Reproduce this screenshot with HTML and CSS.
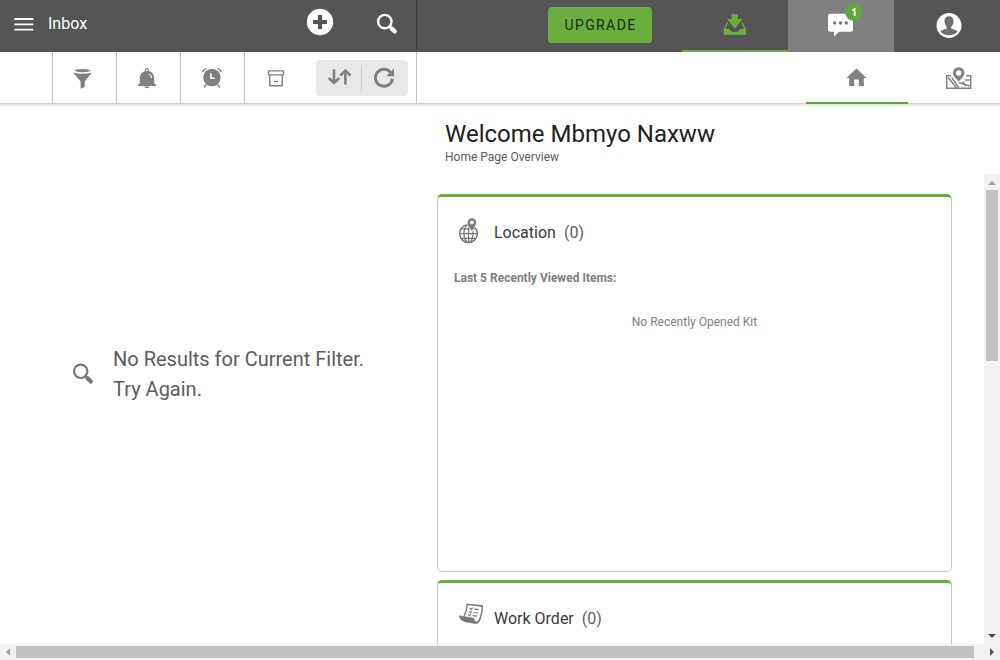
FILE: index.html
```html
<!DOCTYPE html>
<html lang="en">
<head>
<meta charset="utf-8">
<title>Inbox</title>
<link rel="stylesheet" href="styles.css">
</head>
<body>
<div class="app">
  <header class="topbar">
    <div class="topbar-left">
      <svg class="menu-icon" width="20" height="14" viewBox="0 0 20 14"><path d="M.3 2h19M.3 7.4h19M.3 12.6h19" stroke="#fff" stroke-width="1.9"/></svg>
      <span class="topbar-title">Inbox</span>
      <svg class="add-icon" width="28" height="28" viewBox="0 0 28 28"><circle cx="14" cy="14" r="13.2" fill="#fff"/><path d="M14 7v14M7 14h14" stroke="#555" stroke-width="4.2"/></svg>
      <svg class="find-icon" width="24" height="24" viewBox="0 0 24 24" fill="none" stroke="#fff"><circle cx="8.800" cy="9.600" r="6.700" stroke-width="2.400"/><path d="M13.800 14.600l1.800 1.800" stroke-width="2.600"/><path d="M15.800 16.600l2.900 2.900" stroke-width="4.400" stroke-linecap="round"/></svg>
    </div>
    <div class="topbar-right">
      <button class="upgrade">UPGRADE</button>
      <nav class="main-tabs">
        <a class="main-tab current"><svg width="24" height="24" viewBox="0 0 24 24" fill="#6aae40"><path d="M4 9L.7 16.300v5.400h22.200v-5.400L19.600 9l-1.200.8 2.800 6h-3.600l-2.400 2.700H8.400L6 15.800H2.400l2.800-6z"/><path d="M6.200 10.500L3.800 15.800h3l3 3.200h4l3-3.200h3L17.400 10.500z" fill="#555"/><path d="M8.600 1.300h6.300v4.800h4.700L11.800 15.800 4 6.100h4.600z"/></svg></a>
        <a class="main-tab chat"><svg width="28" height="26" viewBox="0 0 28 26"><path d="M3 1.800h21q2 0 2 2v14q0 2-2 2H12l-5 4.800v-4.800H3q-2 0-2-2v-14q0-2 2-2z" fill="#fff"/><g fill="#777"><circle cx="7.700" cy="11" r="1.700"/><circle cx="13.500" cy="11" r="1.700"/><circle cx="19.300" cy="11" r="1.700"/></g></svg><span class="badge">1</span></a>
        <a class="main-tab"><svg class="user-icon" width="26" height="26" viewBox="0 0 26 26"><circle cx="13" cy="12.500" r="12.500" fill="#fff"/><path d="M13 3.200c3 0 4.700 2 4.500 5-.1 2.500-1 4.400-2.300 5.500v1.700c2.500 1 5.200 1.400 6.400 2.900-2 2.700-5 4-8.600 4s-6.600-1.300-8.600-4c1.200-1.500 3.900-1.900 6.400-2.900v-1.700c-1.300-1.100-2.200-3-2.300-5.500-.2-3 1.500-5 4.500-5z" fill="#6e6e6e"/></svg></a>
      </nav>
    </div>
  </header>

  <div class="toolbar">
    <div class="toolbar-left">
      <div class="tool"><svg width="24" height="24" viewBox="0 0 24 24" fill="#808080"><ellipse cx="11.500" cy="4.600" rx="7.800" ry="1.600"/><path d="M2.600 6.700Q11.500 9 20.400 6.700V7.300L13.700 15.400V21L9.600 22.700V15.400L2.600 7.300z"/></svg></div>
      <div class="tool"><svg width="24" height="24" viewBox="0 0 24 24" fill="#808080"><circle cx="12" cy="4.200" r="1.600" fill="none" stroke="#808080" stroke-width="1.200"/><path d="M12 5c4.600 0 7.200 3.200 7.200 7.200v5.300l1.800 1.200v1.200H3v-1.200l1.800-1.200v-5.300C4.800 8.200 7.400 5 12 5z"/><path d="M9 20.500h6q-.5 1.700-3 1.700t-3-1.700z"/><path d="M14 8q2.400 1 2.700 4" fill="none" stroke="#fff" stroke-width="1.100"/></svg></div>
      <div class="tool"><svg width="24" height="24" viewBox="0 0 24 24"><circle cx="12.900" cy="11.500" r="8.700" fill="#808080"/><path d="M3.500 6.200Q4.500 3.200 7.300 2.500M22.300 6.200Q21.300 3.200 18.500 2.500M7.500 18.500l-2.800 3M18.300 18.500l2.800 3" fill="none" stroke="#808080" stroke-width="1.500"/><path d="M11.900 7.300v4.900h3.700" fill="none" stroke="#fff" stroke-width="1.600"/></svg></div>
      <div class="tool"><svg width="24" height="24" viewBox="0 0 24 24" fill="none" stroke="#808080" stroke-width="1.400"><path d="M5.500 4.900h15v4h-15zM6.700 8.900v10.800h12.600V8.900"/><path d="M11 15.500h4"/></svg></div>
      <div class="tool-group">
        <div class="group-cell"><svg width="26" height="20" viewBox="0 0 26 20" fill="none" stroke="#808080" stroke-width="2.600"><path d="M8 1.400v13M2.800 10l5.200 5 5.200-5M19.400 16.500V3M14.200 7.600l5.200-5 5.200 5"/></svg></div>
        <div class="group-cell"><svg width="24" height="24" viewBox="0 0 24 24"><path d="M17.400 6.200A8.500 8.500 0 1 0 19.400 12.600" fill="none" stroke="#808080" stroke-width="2.900"/><path d="M21 2.500V10.300H13.200z" fill="#808080"/></svg></div>
      </div>
    </div>
    <nav class="sub-tabs">
      <a class="sub-tab current"><svg width="22" height="20" viewBox="0 0 22 20" fill="#808080"><path d="M10.500 .4L.4 9.900h2.800V18.100h5v-6.500h4.600v6.500h5V9.900h2.800z"/></svg></a>
      <a class="sub-tab"><svg width="28" height="24" viewBox="0 0 28 24" fill="none" stroke="#808080" stroke-width="1.400"><path d="M6 9.700H1.700v12.600h24V9.700H21M3.200 11.500l8 10M6.700 11.500l7 10M13.700 16.500l11 3.500M17.700 15.500l3 4.500M19.700 14h5"/><path d="M13.700 16C10.700 12 7.700 10.200 7.700 6.900A6 6 0 0 1 19.700 6.900C19.700 10.200 16.700 12 13.700 16z" fill="#808080" stroke="#fff" stroke-width=".5"/><circle cx="13.700" cy="7" r="2.700" fill="#fff" stroke="none"/></svg></a>
    </nav>
  </div>

  <main class="content">
    <section class="results">
      <svg width="24" height="24" viewBox="0 0 24 24" fill="none" stroke="#777"><circle cx="8.700" cy="9.300" r="6.700" stroke-width="2.200"/><path d="M13.600 14.200l2 2" stroke-width="2.600"/><path d="M15.600 16.200l3.200 3.300" stroke-width="4.200" stroke-linecap="round"/></svg>
      <p>No Results for Current Filter.<br>Try Again.</p>
    </section>
    <section class="home">
      <div class="welcome"><h1>Welcome Mbmyo Naxww</h1><p>Home Page Overview</p></div>
      <div class="scroll-area">
        <div class="cards">
          <article class="card">
            <div class="card-head"><svg width="26" height="28" viewBox="0 -.8 26 28" fill="none" stroke="#777" stroke-width="1.200"><circle cx="11.500" cy="16.800" r="8.900" stroke-width="1.500"/><ellipse cx="11.500" cy="16.800" rx="4.600" ry="8.900"/><path d="M11.500 8v17.500M2.800 16.800h17.400M4.500 12h14M4.500 21.500h14"/><path d="M14.900 14.800C12.500 10.500 10.300 8.500 10.300 5.700a4.600 4.600 0 0 1 9.200 0c0 2.800-2.200 4.800-4.600 9.100z" fill="#777" stroke="#fff" stroke-width=".7"/><circle cx="14.900" cy="5.600" r="2" fill="#fff" stroke="none"/></svg><h2>Location</h2><span>(0)</span></div>
            <h3>Last 5 Recently Viewed Items:</h3>
            <p class="empty">No Recently Opened Kit</p>
          </article>
          <article class="card">
            <div class="card-head"><svg width="26" height="28" viewBox="0 2.500 26 28" fill="none" stroke="#777" stroke-width="1.400"><path d="M7.200 16.500Q10 10.500 10.300 4.800L25.300 6.500Q25.300 15 21.800 21.500"/><path d="M2 16.300L16.500 18.800Q17 22 19.500 22.500Q22.200 22.200 23.500 18.500Q22.500 24.300 18.500 24L8 22.200Q3.500 21.200 2 16.300z" fill="#777" stroke-width=".7"/><path d="M12.800 8.800l1.200 1.100 1.800-1.700M17.300 9.700l4.500.5M12.100 12l1.200 1.100 1.800-1.700M16.600 13l4.500.5M11.100 15.200l1.200 1.100 1.800-1.700M15.600 16.200l4.500.5" stroke-width="1.200"/></svg><h2>Work Order</h2><span>(0)</span></div>
          </article>
        </div>
        <div class="vbar"><i class="arrow up"></i><div class="vthumb"></div><i class="arrow down"></i></div>
      </div>
    </section>
  </main>
  <div class="hbar"><i class="arrow left"></i><div class="hthumb"></div><i class="arrow right"></i></div>
</div>
</body>
</html>
```
FILE: styles.css
```css
* { box-sizing: border-box; }
body { margin: 0; font-family: Roboto, "Liberation Sans", sans-serif; color: #212121; background: #fff; }
h1, h2, h3, p { margin: 0; font-weight: 400; }
svg { display: block; flex: none; }

.app { width: 1000px; height: 660px; display: grid; grid-template-columns: 1000px; grid-template-rows: 52px 52px 540px 16px; overflow: hidden; }

.topbar { display: flex; background: #555; }
.topbar-left { width: 417px; flex: none; height: 50px; border-right: 1px solid #3c3c3c; display: flex; align-items: flex-start; padding-left: 14px; }
.menu-icon { margin-top: 17px; }
.topbar-title { margin-left: 14px; width: 258px; font-size: 16px; line-height: 24px; margin-top: 12px; color: #fff; }
.add-icon { margin-top: 8px; }
.find-icon { margin: 12px 0 0 42px; }
.topbar-right { flex: 1; display: flex; justify-content: flex-end; align-items: flex-start; }
.upgrade { width: 104px; height: 36px; margin: 7px 30px 0 0; padding: 0 0 0 1px; border: 0; border-radius: 4px; background: #6aae40; font: 400 14px Roboto, sans-serif; letter-spacing: 1.4px; color: #1c2f12; }
.main-tabs { display: flex; }
.main-tab { position: relative; width: 106px; height: 52px; display: flex; justify-content: center; align-items: flex-start; padding-top: 13px; }
.main-tab.current { border-bottom: 2px solid #6aae40; }
.main-tab.chat { background: #808080; padding-top: 12px; }
.user-icon { margin-left: 3px; }
.badge { position: absolute; left: 57px; top: 3px; width: 18px; height: 18px; border-radius: 50%; background: #5fa83f; color: #fff; font: 700 10px/18px "Open Sans", sans-serif; text-align: center; }

.toolbar { display: flex; border-bottom: 1px solid #d2d2d2; box-shadow: 0 1px 3px rgba(0, 0, 0, .16); position: relative; background: #fff; }
.toolbar-left { width: 417px; flex: none; border-right: 1px solid #c4c4c4; padding-left: 52px; display: flex; }
.tool { width: 64px; border-left: 1px solid #c4c4c4; padding: 14px 0 0 18px; }
.tool-group { width: 92px; height: 36px; margin: 8px 0 0 8px; background: #e8e8e8; border-radius: 4px; display: flex; align-items: center; }
.group-cell { width: 46px; height: 26px; display: flex; align-items: center; justify-content: center; }
.group-cell:first-child { border-right: 1px solid #c8c8c8; }
.sub-tabs { flex: 1; display: flex; padding-left: 389px; overflow: hidden; height: 52px; }
.sub-tab { flex: 0 0 102px; display: flex; justify-content: center; padding-top: 14px; }
.sub-tab.current { border-bottom: 2px solid #5da535; padding: 16px 1px 0 0; }

.content { display: flex; min-height: 0; }
.results { width: 417px; display: flex; align-items: center; padding-left: 72px; }
.results p { margin-left: 17px; font-size: 20px; line-height: 30px; color: #5c5c5c; }
.home { flex: 1; display: flex; flex-direction: column; }
.welcome { height: 70px; padding: 14px 0 0 28px; }
.welcome h1 { font-size: 24px; line-height: 32px; }
.welcome p { font-size: 12px; line-height: 14px; color: #5c5c5c; }
.scroll-area { height: 470px; display: flex; }
.cards { flex: 1; height: 470px; overflow: hidden; padding: 20px 32px 0 20px; }
.card { height: 378px; margin-bottom: 8px; border: 1px solid #c8c8c8; border-top: 3px solid #6aae40; border-radius: 5px; }
.card-head { display: flex; align-items: center; height: 40px; margin-top: 15px; padding-left: 19px; font-size: 16px; color: #606060; }
.card-head h2 { margin: 0 8px 0 11px; font-size: 16px; color: #3a3a3a; }
.card-head svg { margin-top: -4px; }
.card h3 { margin: 18px 0 0 16px; font-size: 12px; line-height: 16px; font-weight: 700; color: #808080; }
.empty { margin-top: 28px; text-align: center; font-size: 12px; line-height: 16px; color: #808080; }

.vbar { width: 16px; background: #f1f1f1; display: flex; flex-direction: column; align-items: center; padding: 7px 0 6px; }
.vthumb { width: 12px; height: 171px; margin: 5px 0 auto; background: #c1c1c1; }
.hbar { background: #f1f1f1; display: flex; align-items: center; padding: 0 6px; }
.hthumb { width: 958px; height: 12px; margin: 0 auto 0 6px; background: #c1c1c1; }
.arrow { width: 8px; height: 4px; background: #a3a3a3; clip-path: polygon(50% 0, 100% 100%, 0 100%); }
.arrow.down { background: #505050; clip-path: polygon(0 0, 100% 0, 50% 100%); }
.arrow.left { width: 4px; height: 8px; clip-path: polygon(0 50%, 100% 0, 100% 100%); }
.arrow.right { width: 4px; height: 8px; background: #505050; clip-path: polygon(0 0, 100% 50%, 0 100%); }
```
